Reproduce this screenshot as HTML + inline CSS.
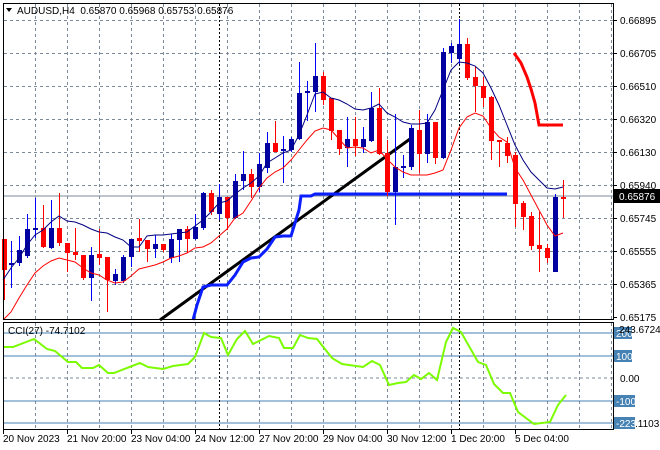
<!DOCTYPE html>
<html><head><meta charset="utf-8"><style>
html,body{margin:0;padding:0;background:#fff;}
svg{display:block;font-family:"Liberation Sans",sans-serif;}
</style></head><body>
<svg id="s" width="660" height="450" viewBox="0 0 660 450" xmlns="http://www.w3.org/2000/svg">
<rect width="660" height="450" fill="#fff"/>
<g id="grid" stroke="#7b8a99" stroke-width="1" stroke-dasharray="3,3"></g>
<line x1="4" y1="196" x2="613" y2="196" stroke="#7b8a99" stroke-width="1"/>
<g stroke="#4682b4" stroke-width="1">
<line x1="4" y1="333" x2="613" y2="333"/><line x1="4" y1="356" x2="613" y2="356"/>
<line x1="4" y1="401" x2="613" y2="401"/><line x1="4" y1="423" x2="613" y2="423"/>
</g>
<line x1="4" y1="378" x2="613" y2="378" stroke="#7b8a99" stroke-dasharray="3,3"/>
<g stroke="#000" stroke-dasharray="2,2"><line x1="219.5" y1="4" x2="219.5" y2="430"/><line x1="459.5" y1="4" x2="459.5" y2="430"/></g>
<polyline fill="none" stroke="#000000" stroke-width="3" points="160,320 410,139"/>
<polyline fill="none" stroke="#0a1eff" stroke-width="3" points="193,320 197,305 203,287 211,285 227,285 235,275 243,262 251,258 259,257 267,249 275,237 283,236 291,236 299,210 301,196 311,196 315,194 507,194"/>
<g id="c"></g>
<polyline fill="none" stroke="#000080" stroke-width="1" points="3,280 11,268 19,258 27,245 35,235 43,230 51,222 59,216 67,221 75,222 83,225 91,229 99,232 107,233 115,237 123,240 131,247 139,247 147,236 155,235 163,235 171,234 179,233 187,232 195,226 203,220 211,212 219,203 227,201 235,194 243,188 251,183 259,176 267,163 275,158 283,153 291,150 299,135 307,115 315,94 323,92 331,98 339,100 347,104 355,109 363,110 371,108 379,104 387,113 395,117 403,122 411,124 419,124 427,123 435,110 443,90 451,70 459,62 467,63 475,66 483,73 491,88 499,105 507,125 515,145 523,160 531,172 539,180 547,188 555,189 563,187"/>
<polyline fill="none" stroke="#ff0000" stroke-width="1" points="3,320 11,312 19,298 27,285 35,273 43,266 51,261 59,258 67,260 75,262 83,268 91,273 99,275 107,280 115,283 123,282 131,276 139,269 147,267 155,265 163,262 171,258 179,256 187,253 195,248 203,247 211,243 219,236 227,229 235,218 243,213 251,201 259,188 267,178 275,172 283,168 291,160 299,150 307,140 315,131 323,128 331,130 339,139 347,148 355,147 363,148 371,153 379,150 387,159 395,167 403,172 411,175 419,175 427,175 435,173 443,170 451,150 459,128 467,117 475,113 483,116 491,128 499,137 507,142 515,168 523,180 531,195 539,210 547,225 555,236 563,233"/>
<polyline fill="none" stroke="#ff0000" stroke-width="3" points="514,53 521,63 527,77 531,89 535,103 539,125 563,125"/>
<polyline fill="none" stroke="#7cfc00" stroke-width="2" points="3,347 13,347 34,339 47,349 55,351 68,362 76,362 82,368 93,368 99,365 108,373 114,373 140,363 148,367 163,369 173,366 188,364 195,357 204,333 211,337 221,338 228,355 237,339 245,331 253,344 269,336 279,338 284,348 293,348 300,335 308,338 317,339 332,358 342,364 363,367 372,361 380,365 389,385 398,383 406,382 414,375 421,379 429,373 437,380 446,342 453,328 461,332 478,362 486,365 494,384 503,393 510,393 518,412 534,424 550,422 558,405 566,395"/>
<rect x="3.5" y="3.5" width="610" height="316" fill="none" stroke="#000"/>
<rect x="3.5" y="322.5" width="610" height="107" fill="none" stroke="#000"/>
<g font-size="10" fill="#000" id="ax"></g>
<rect x="614" y="189" width="46" height="14" fill="#000"/>
<text x="619" y="200" font-size="10" fill="#fff">0.65876</text>
<g font-size="10" fill="#fff">
<rect x="614" y="327" width="18" height="12" fill="#4682b4"/><text x="616" y="337">200</text>
<rect x="614" y="350" width="18" height="12" fill="#4682b4"/><text x="616" y="360">100</text>
<rect x="614" y="395" width="21" height="12" fill="#4682b4"/><text x="616" y="405">-100</text>
<rect x="614" y="417" width="21" height="12" fill="#4682b4"/><text x="616" y="427">-223</text>
</g>
<g font-size="10" fill="#000">
<text x="619" y="333">243.6724</text>
<text x="620" y="382">0.00</text>
<text x="635" y="427">.1103</text>
<text x="8" y="334">CCI(27) -74.7102</text>
<text x="17" y="14">AUDUSD,H4&#160;&#160;0.65870 0.65968 0.65753 0.65876</text>
</g>
<polygon points="6,8 12,8 9,12" fill="#000"/>
</svg>
<script>
var ns="http://www.w3.org/2000/svg",s=document.getElementById('s');
function el(p,t,a,txt){var e=document.createElementNS(ns,t);for(var k in a)e.setAttribute(k,a[k]);if(txt)e.textContent=txt;p.appendChild(e);return e;}
var g=document.getElementById('grid');
[20,53,86,119,152,185,218,251,284].forEach(function(y){el(g,'line',{x1:4,y1:y+.5,x2:613,y2:y+.5});});
for(var x=35;x<613;x+=32){el(g,'line',{x1:x+.5,y1:4,x2:x+.5,y2:319});el(g,'line',{x1:x+.5,y1:323,x2:x+.5,y2:429});}
var ax=document.getElementById('ax');
var P=[["0.66895",20],["0.66705",53],["0.66510",86],["0.66320",119],["0.66130",152],["0.65940",185],["0.65745",218],["0.65555",251],["0.65365",284],["0.65175",317]];
P.forEach(function(p){el(ax,'text',{x:620,y:p[1]+4},p[0]);el(ax,'line',{x1:613,y1:p[1]+.5,x2:617,y2:p[1]+.5,stroke:'#000'});});
var D=[["20 Nov 2023",3],["21 Nov 20:00",67],["23 Nov 04:00",131],["24 Nov 12:00",195],["27 Nov 20:00",259],["29 Nov 04:00",323],["30 Nov 12:00",387],["1 Dec 20:00",451],["5 Dec 04:00",515]];
D.forEach(function(d){el(ax,'text',{x:d[1],y:442},d[0]);el(ax,'line',{x1:d[1]+.5,y1:430,x2:d[1]+.5,y2:434,stroke:'#000'});});
var C=[[4,239,270,239,300],[11,265,263,241,288],[19,263,250,236,266],[27,256,229,214,258],[35,230,228,198,238],[43,228,247,205,248],[51,248,228,200,249],[59,228,243,193,246],[67,243,253,243,272],[75,252,255,228,260],[83,255,278,255,280],[91,278,255,247,301],[99,254,258,229,265],[107,257,280,257,312],[115,281,274,269,285],[123,281,257,255,283],[131,257,239,239,267],[139,238,241,219,252],[147,240,249,241,262],[155,249,244,235,258],[163,244,250,244,252],[171,258,239,234,263],[179,240,229,229,262],[187,229,239,226,253],[195,239,227,214,240],[203,228,193,192,230],[211,193,212,190,215],[219,214,197,184,220],[227,197,218,197,230],[235,218,181,174,219],[243,181,174,151,190],[251,174,187,169,198],[259,187,164,153,192],[267,168,143,132,173],[275,143,152,121,152],[283,151,149,136,183],[291,150,139,137,152],[299,139,93,62,140],[307,93,91,81,121],[315,92,76,43,112],[323,76,100,72,105],[331,98,131,98,140],[339,130,149,130,155],[347,148,139,117,167],[355,139,146,117,156],[363,147,139,127,153],[371,141,108,92,142],[379,108,154,88,155],[387,153,192,140,196],[395,192,167,114,225],[403,167,166,155,178],[411,167,128,125,170],[419,130,154,110,173],[427,154,122,114,163],[435,122,158,122,164],[443,158,52,48,159],[451,53,46,43,63],[459,59,44,19,64],[467,44,78,38,80],[475,77,86,66,112],[483,86,98,77,107],[491,97,141,96,160],[499,140,142,140,167],[507,143,156,137,163],[515,155,204,152,227],[523,203,217,201,230],[531,216,246,212,250],[539,245,249,212,272],[547,248,258,244,263],[555,272,197,194,272],[563,197,197,180,218]];
var cg=document.getElementById('c');
C.forEach(function(c){var x=c[0],o=c[1],cl=c[2],h=c[3],l=c[4];var col=cl<o?'#0000a0':'#ff0000';var wc=cl<o?'#0000ff':'#ff0000';
el(cg,'line',{x1:x+.5,y1:h,x2:x+.5,y2:l,stroke:wc});
var t=Math.min(o,cl),b=Math.max(o,cl);if(b-t<2){b=t+2;}
el(cg,'rect',{x:x-2,y:t,width:5,height:b-t,fill:col});});
</script>
</body></html>
